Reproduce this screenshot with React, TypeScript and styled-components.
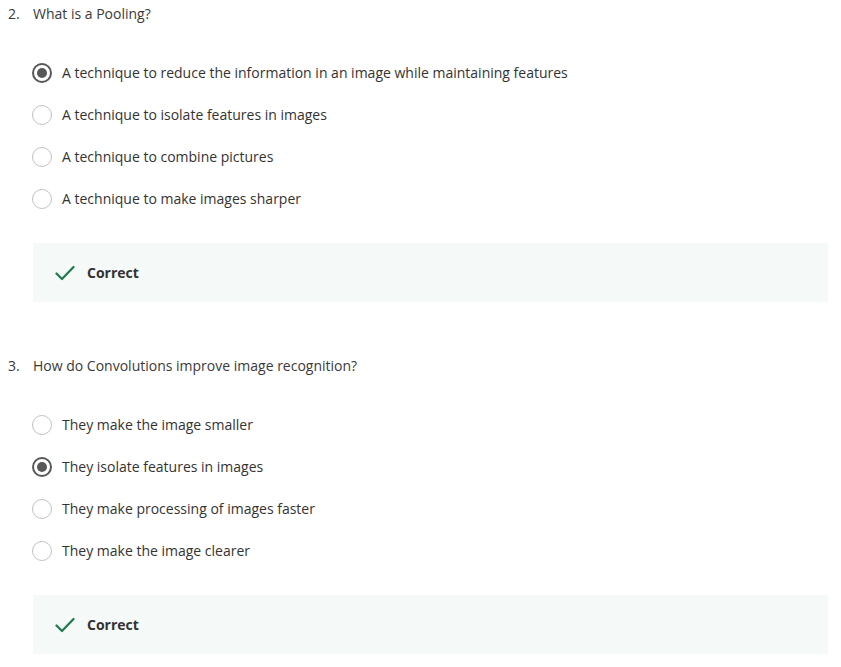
import React from "react";
import styled, { createGlobalStyle } from "styled-components";

const Global = createGlobalStyle`
  html, body { margin: 0; padding: 0; background: #fff; }
  body { font-family: "Open Sans", "Liberation Sans", sans-serif; color: #333; }
`;

const Page = styled.div`
  padding: 3px 13px 0 8px;
  display: flex;
  flex-direction: column;
`;

const Question = styled.section<{ $gapTop: number }>`
  margin-top: ${(p) => p.$gapTop}px;
  display: flex;
  flex-direction: column;
`;

const Header = styled.div`
  display: flex;
  height: 20px;
  align-items: center;
  font-size: 14px;
  color: #3a3a3a;
`;

const Num = styled.span`
  width: 25px;
  flex: none;
`;

const Options = styled.div`
  margin-top: 28px;
  padding-left: 24px;
  display: flex;
  flex-direction: column;
`;

const Option = styled.label`
  height: 42px;
  display: flex;
  align-items: center;
  gap: 10px;
  font-size: 14px;
  color: #333;
`;

const Radio = styled.span<{ $checked: boolean }>`
  width: 20px;
  height: 20px;
  margin-top: 1px;
  box-sizing: border-box;
  border-radius: 50%;
  border: ${(p) => (p.$checked ? "2px solid #585858" : "1.5px solid #c2c2c2")};
  display: flex;
  align-items: center;
  justify-content: center;
  flex: none;
  &::after {
    content: "";
    display: ${(p) => (p.$checked ? "block" : "none")};
    width: 10px;
    height: 10px;
    border-radius: 50%;
    background: #585858;
  }
`;

const Feedback = styled.div`
  margin: 24px 0 0 25px;
  height: 59px;
  background: #f5f9f8;
  display: flex;
  align-items: center;
  padding-left: 22px;
  gap: 12px;
  font-size: 14px;
  font-weight: 700;
  color: #333;
`;

const Check = () => (
  <svg width="20" height="16" viewBox="0 0 20 16" fill="none">
    <path d="M1.5 8.5 L7 14 L18.5 2" stroke="#1f7a4d" strokeWidth="2.2" strokeLinecap="round" strokeLinejoin="round" />
  </svg>
);

type Q = { n: number; text: string; options: string[]; selected: number; gap: number };

const questions: Q[] = [
  {
    n: 2,
    text: "What is a Pooling?",
    options: [
      "A technique to reduce the information in an image while maintaining features",
      "A technique to isolate features in images",
      "A technique to combine pictures",
      "A technique to make images sharper",
    ],
    selected: 0,
    gap: 0,
  },
  {
    n: 3,
    text: "How do Convolutions improve image recognition?",
    options: [
      "They make the image smaller",
      "They isolate features in images",
      "They make processing of images faster",
      "They make the image clearer",
    ],
    selected: 1,
    gap: 53,
  },
];

export default function App() {
  return (
    <>
      <Global />
      <Page>
        {questions.map((q) => (
          <Question key={q.n} $gapTop={q.gap}>
            <Header>
              <Num>{q.n}.</Num>
              <span>{q.text}</span>
            </Header>
            <Options>
              {q.options.map((o, i) => (
                <Option key={i}>
                  <Radio $checked={i === q.selected} />
                  <span>{o}</span>
                </Option>
              ))}
            </Options>
            <Feedback>
              <Check />
              <span>Correct</span>
            </Feedback>
          </Question>
        ))}
      </Page>
    </>
  );
}
